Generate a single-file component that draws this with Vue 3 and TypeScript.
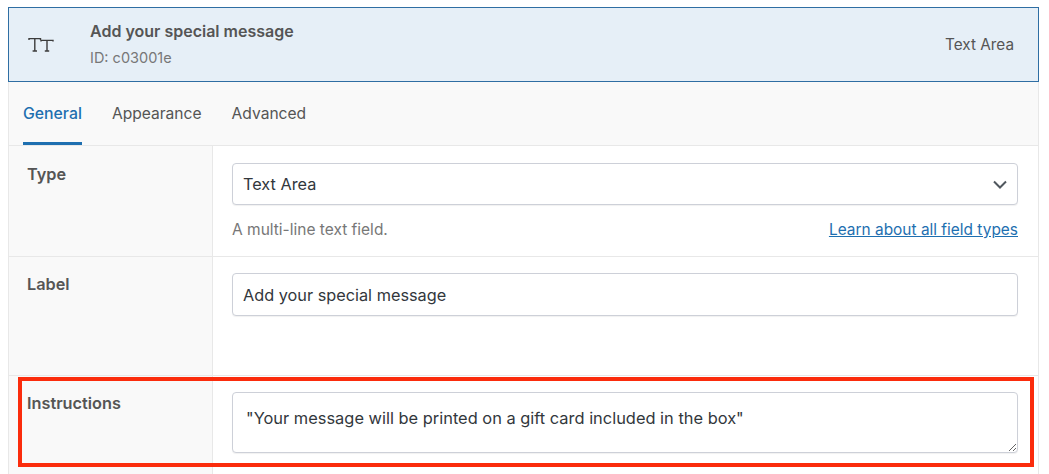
<script setup lang="ts">
const tabs: string[] = ['General', 'Appearance', 'Advanced']
const instructions = '"Your message will be printed on a gift card included in the box"'
</script>

<template>
  <div class="page">
    <div class="panel">
      <header class="head">
        <svg class="type-icon" width="27" height="18" viewBox="0 0 27 18" fill="none" stroke="#3c3c3c" stroke-width="1.4">
          <path d="M2 4V2.6h11.5V4M7.8 2.6V15M5.6 15h4.4" />
          <path d="M14 5.5V4.4h12v1.1M20 4.4V15M17.8 15h4.4" />
        </svg>
        <div class="head-text">
          <div class="head-title">Add your special message</div>
          <div class="head-id">ID: c03001e</div>
        </div>
        <div class="head-type">Text Area</div>
      </header>

      <nav class="tabs">
        <a v-for="(t, i) in tabs" :key="t" class="tab" :class="{ active: i === 0 }">{{ t }}</a>
      </nav>

      <section class="row row-type">
        <div class="label">Type</div>
        <div class="field">
          <div class="select">
            <span>Text Area</span>
            <svg width="14" height="9" viewBox="0 0 14 9" fill="none" stroke="#50575e" stroke-width="2">
              <path d="M1 1.5l6 6 6-6" />
            </svg>
          </div>
          <div class="hint-row">
            <span class="hint">A multi-line text field.</span>
            <a class="learn">Learn about all field types</a>
          </div>
        </div>
      </section>

      <section class="row row-label">
        <div class="label">Label</div>
        <div class="field">
          <input class="input" type="text" value="Add your special message" />
        </div>
      </section>

      <section class="row row-instr">
        <div class="label">Instructions</div>
        <div class="field">
          <textarea class="area" :value="instructions"></textarea>
        </div>
      </section>

      <div class="highlight"></div>
    </div>
  </div>
</template>

<style scoped>
.page {
  width: 1049px;
  height: 474px;
  overflow: hidden;
  background: #fff;
  font-family: Inter, "Liberation Sans", sans-serif;
  padding: 7px 10px 0 8px;
  box-sizing: border-box;
}
.panel {
  position: relative;
  border-right: 1px solid #e8e8e8;
  border-left: 1px solid #e8e8e8;
  height: 480px;
}
.head {
  display: flex;
  align-items: center;
  height: 75px;
  box-sizing: border-box;
  margin: 0 -1px;
  border: 1px solid #2f6ea3;
  background: #e6eff7;
  padding: 0 24px 0 18px;
}
.type-icon {
  margin-right: 36px;
  flex: none;
}
.head-text {
  flex: 1;
  margin-top: -1px;
}
.head-title {
  font-size: 16px;
  font-weight: 600;
  color: #555;
  line-height: 20px;
}
.head-id {
  font-size: 14.5px;
  color: #777;
  line-height: 20px;
  margin-top: 7px;
}
.head-type {
  font-size: 15.3px;
  color: #555;
}
.tabs {
  display: flex;
  gap: 30px;
  height: 64px;
  box-sizing: border-box;
  padding-left: 14px;
  background: #f9f9f9;
  border-bottom: 1px solid #e8e8e8;
}
.tab {
  font-size: 15.6px;
  color: #555;
  line-height: 64px;
  height: 63px;
  box-sizing: border-box;
}
.tab.active {
  font-size: 15.8px;
  color: #1e6fb0;
  font-weight: 500;
  border-bottom: 3px solid #1e6fb0;
}
.row {
  display: grid;
  grid-template-columns: 204px 1fr;
  border-bottom: 1px solid #e8e8e8;
  box-sizing: border-box;
}
.row-type { height: 111px; }
.row-label { height: 119px; }
.row-instr { border-bottom: 0; height: 110px; }
.label {
  background: #f9f9f9;
  border-right: 1px solid #e8e8e8;
  font-size: 16.3px;
  font-weight: 600;
  color: #555;
  padding: 18px 0 0 18px;
  line-height: 20px;
}
.row-label .label,
.row-instr .label { padding-top: 17px; }
.field {
  padding: 17px 20px 0 19px;
}
.row-label .field { padding-top: 16px; }
.row-instr .field { padding-top: 16px; }
.select,
.input,
.area {
  box-sizing: border-box;
  width: 100%;
  background: #fff;
  border: 1px solid #cdd0d8;
  border-radius: 4px;
  box-shadow: 0 1px 1px rgba(0, 0, 0, 0.06);
  font-family: inherit;
  font-size: 16.3px;
  color: #32373c;
}
.select {
  display: flex;
  align-items: center;
  justify-content: space-between;
  height: 42px;
  padding: 0 10px 0 10px;
}
.input {
  display: block;
  height: 43px;
  padding: 0 10px;
  outline: none;
}
.area {
  display: block;
  height: 61px;
  padding: 15px 13px 0;
  line-height: 20px;
  font-size: 16.42px;
  outline: none;
}
.hint-row {
  display: flex;
  justify-content: space-between;
  align-items: baseline;
  margin-top: 15px;
}
.hint {
  font-size: 15.5px;
  color: #777;
}
.learn {
  font-size: 15.45px;
  color: #1e6fb0;
  text-decoration: underline;
}
.highlight {
  position: absolute;
  left: 9px;
  top: 370px;
  width: 1016px;
  height: 90px;
  box-sizing: border-box;
  border: 4px solid #fb2c0c;
  pointer-events: none;
}
</style>

<style>
html, body { margin: 0; background: #fff; }
</style>
